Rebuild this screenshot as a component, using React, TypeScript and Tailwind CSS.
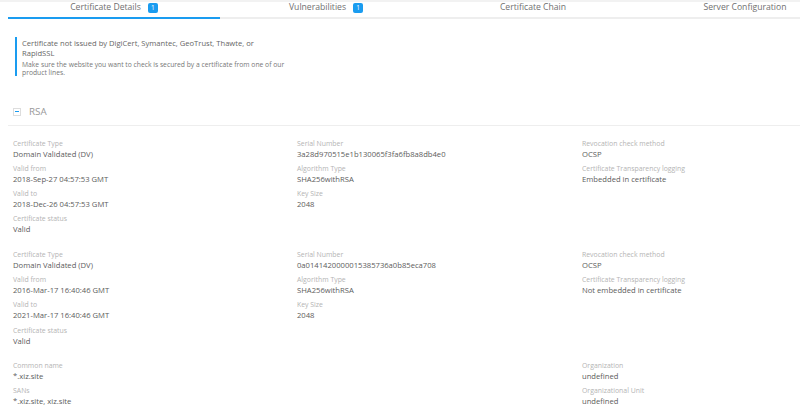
const Field = ({ label, value }: { label: string; value: string }) => (
  <div className="h-[25.3px]">
    <div className="text-[6.9px] leading-[10px] text-[#b4b4b4] whitespace-nowrap">{label}</div>
    <div className="text-[7.65px] leading-[11px] text-[#5c5c5c] whitespace-nowrap">{value}</div>
  </div>
);

type Col = { label: string; value: string }[];

const FieldGrid = ({ cols, className }: { cols: Col[]; className?: string }) => (
  <div className={`grid grid-cols-[284px_285px_1fr] pl-[13px] ${className ?? ''}`}>
    {cols.map((col, i) => (
      <div key={i}>
        {col.map(f => <Field key={f.label} label={f.label} value={f.value} />)}
      </div>
    ))}
  </div>
);

const certA: Col[] = [
  [
    { label: 'Certificate Type', value: 'Domain Validated (DV)' },
    { label: 'Valid from', value: '2018-Sep-27 04:57:53 GMT' },
    { label: 'Valid to', value: '2018-Dec-26 04:57:53 GMT' },
    { label: 'Certificate status', value: 'Valid' },
  ],
  [
    { label: 'Serial Number', value: '3a28d970515e1b130065f3fa6fb8a8db4e0' },
    { label: 'Algorithm Type', value: 'SHA256withRSA' },
    { label: 'Key Size', value: '2048' },
  ],
  [
    { label: 'Revocation check method', value: 'OCSP' },
    { label: 'Certificate Transparency logging', value: 'Embedded in certificate' },
  ],
];

const certB: Col[] = [
  [
    { label: 'Certificate Type', value: 'Domain Validated (DV)' },
    { label: 'Valid from', value: '2016-Mar-17 16:40:46 GMT' },
    { label: 'Valid to', value: '2021-Mar-17 16:40:46 GMT' },
    { label: 'Certificate status', value: 'Valid' },
  ],
  [
    { label: 'Serial Number', value: '0a0141420000015385736a0b85eca708' },
    { label: 'Algorithm Type', value: 'SHA256withRSA' },
    { label: 'Key Size', value: '2048' },
  ],
  [
    { label: 'Revocation check method', value: 'OCSP' },
    { label: 'Certificate Transparency logging', value: 'Not embedded in certificate' },
  ],
];

const names: Col[] = [
  [
    { label: 'Common name', value: '*.xiz.site' },
    { label: 'SANs', value: '*.xiz.site, xiz.site' },
  ],
  [],
  [
    { label: 'Organization', value: 'undefined' },
    { label: 'Organizational Unit', value: 'undefined' },
  ],
];

const Badge = () => (
  <span className="inline-flex items-center justify-center w-[10px] h-[10px] mt-[1px] rounded-[2px] bg-[#1a9cf0] text-white text-[6.5px] leading-none ml-[7px]">1</span>
);

export default function App() {
  return (
    <div className="w-[800px] h-[409px] overflow-hidden bg-white font-['Open_Sans',sans-serif]">
      <div className="h-[2px] bg-[#f2f2f2]" />
      <div className="flex h-[17px] ml-[8px] border-b-2 border-[#eeeeee] text-[8.65px] leading-[10px] text-[#707070]">
        <div className="w-[212px] shrink-0 -mb-[2px] h-[17px] border-b-2 border-[#1a9cf0] flex justify-center items-start">
          <span>Certificate Details</span><Badge />
        </div>
        <div className="w-[212px] shrink-0 flex justify-center items-start"><span>Vulnerabilities</span><Badge /></div>
        <div className="w-[212px] shrink-0 pr-[10px] flex justify-center items-start"><span>Certificate Chain</span></div>
        <div className="w-[202px] shrink-0 flex justify-center items-start"><span className="whitespace-nowrap">Server Configuration</span></div>
      </div>

      <div className="ml-[15px] mt-[18px] w-[272px] h-[39px] border-l-2 border-[#1a9cf0] pl-[5px]">
        <div className="text-[7.6px] leading-[10px] text-[#666] pt-[1px]">Certificate not issued by DigiCert, Symantec, GeoTrust, Thawte, or RapidSSL</div>
        <div className="text-[6.75px] leading-[7.5px] text-[#777] mt-[3px]">Make sure the website you want to check is secured by a certificate from one of our product lines.</div>
      </div>

      <div className="flex items-center h-[24px] mt-[26px] ml-[8px] border-b border-[#eeeeee] pb-[4px]">
        <span className="ml-[5px] w-[8px] h-[8px] border border-[#dddddd] flex items-center justify-center">
          <span className="w-[4px] h-[1px] bg-[#1a9cf0]" />
        </span>
        <span className="ml-[8px] text-[9.8px] leading-none text-[#999]">RSA</span>
      </div>

      <FieldGrid cols={certA} className="mt-[12.5px]" />
      <FieldGrid cols={certB} className="mt-[10px]" />
      <FieldGrid cols={names} className="mt-[10px]" />
    </div>
  );
}
